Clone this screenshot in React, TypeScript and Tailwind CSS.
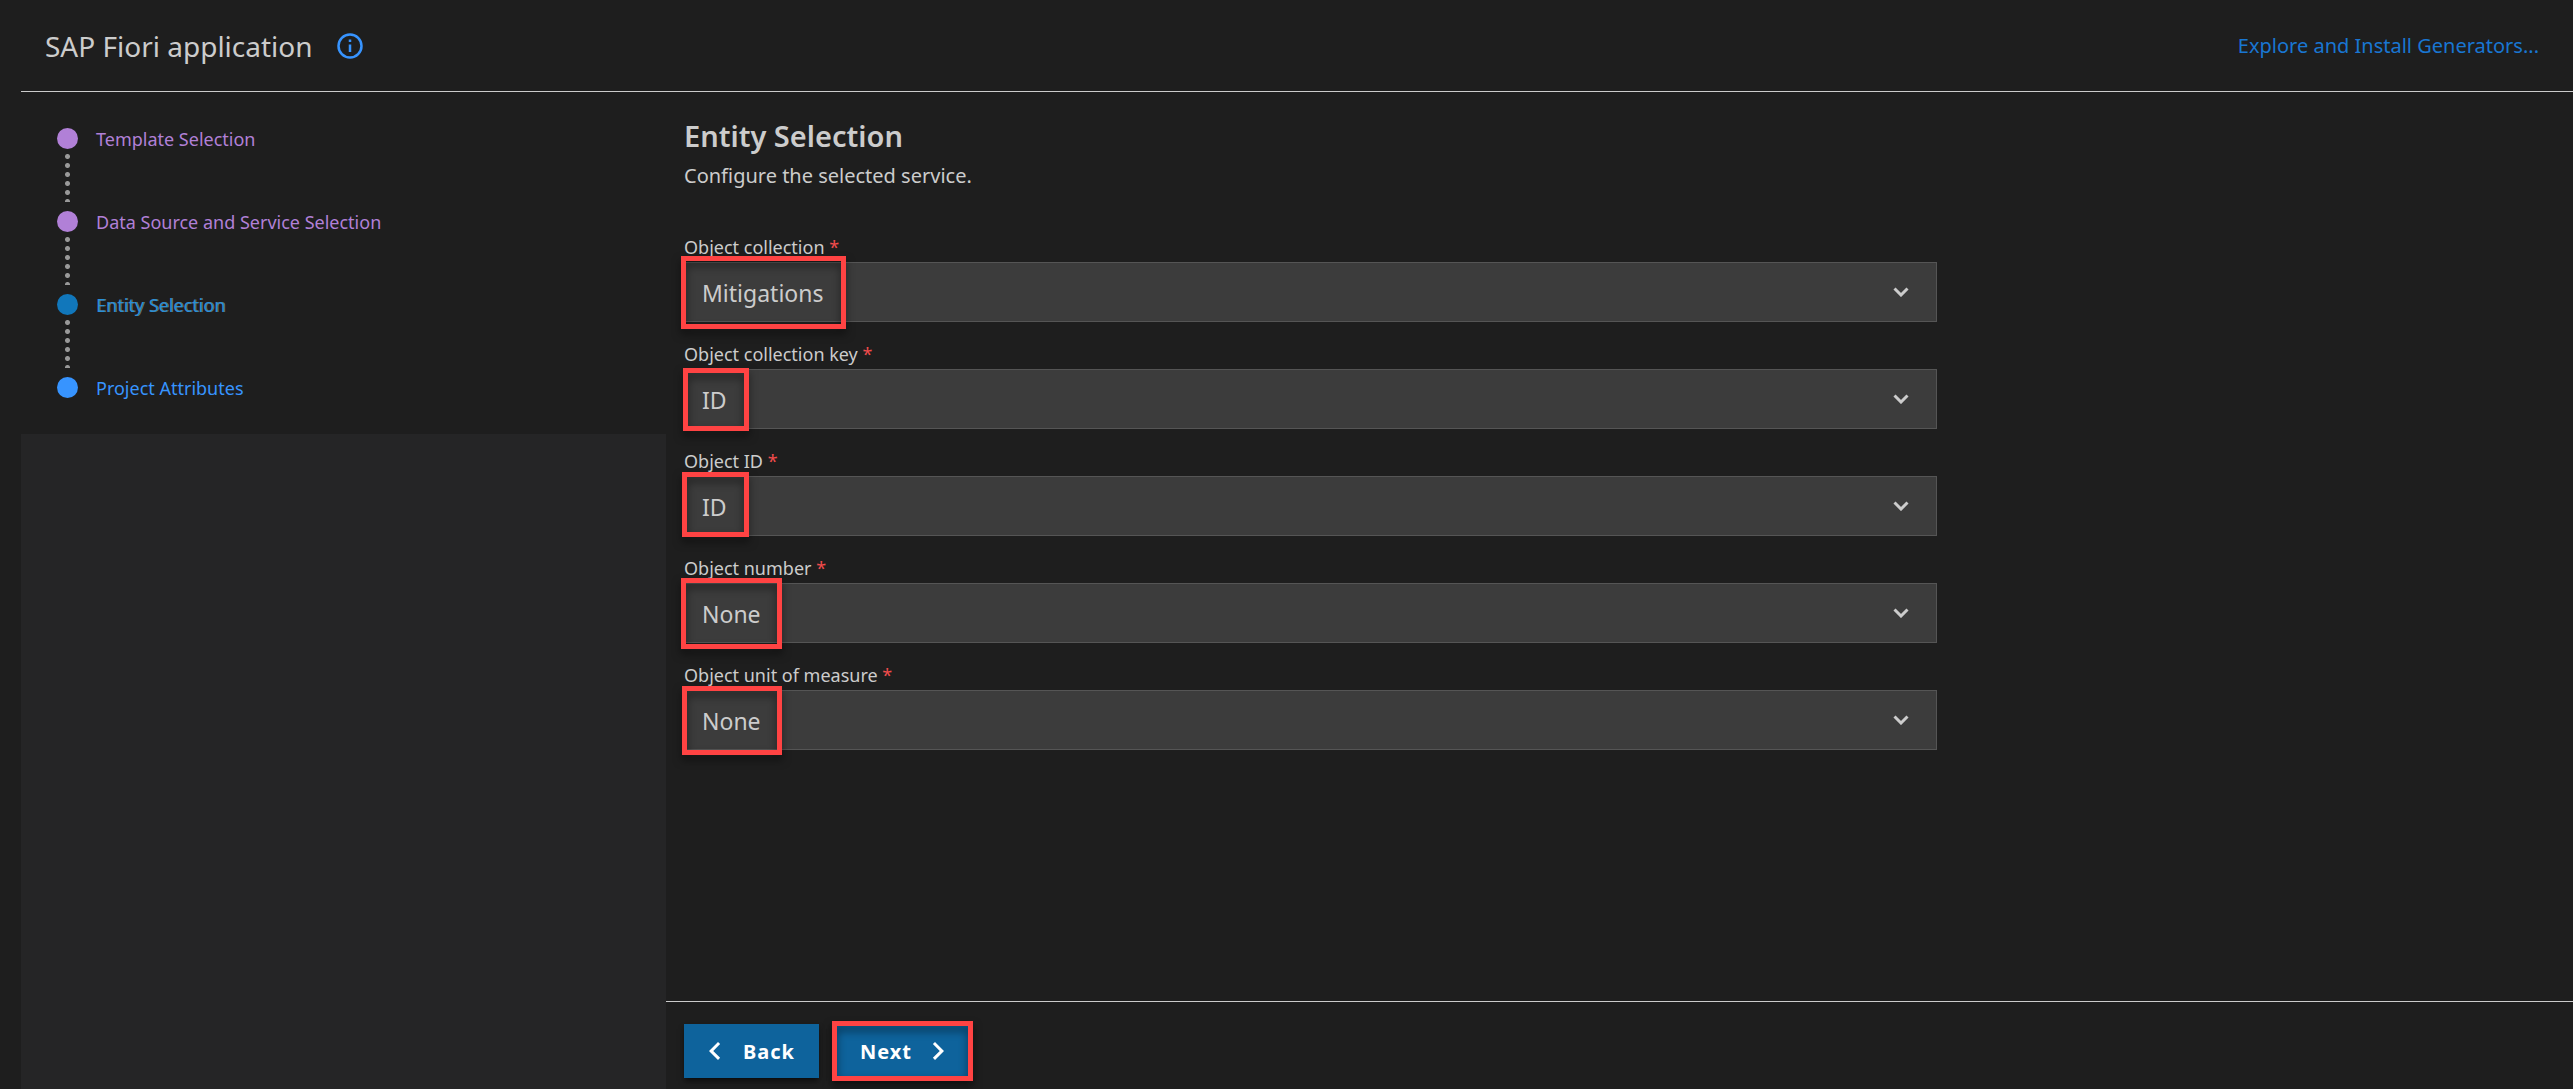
import React from "react";

type Step = { label: string; dot: string; text: string };

const steps: Step[] = [
  { label: "Template Selection", dot: "bg-[#b180d7]", text: "text-[#b180d7]" },
  { label: "Data Source and Service Selection", dot: "bg-[#b180d7]", text: "text-[#b180d7]" },
  {
    label: "Entity Selection",
    dot: "bg-[#1177bb]",
    text: "text-[#2a8fd6] [text-shadow:1px_0_0_rgba(204,204,204,0.5)]",
  },
  { label: "Project Attributes", dot: "bg-[#3794ff]", text: "text-[#3794ff]" },
];

type Field = { id: string; label: string; value: string; mark: string };

const fields: Field[] = [
  { id: "collection", label: "Object collection", value: "Mitigations", mark: "-left-[3px] -top-1.5 h-[73px] w-[165px]" },
  { id: "collection-key", label: "Object collection key", value: "ID", mark: "-left-px -top-px h-[63px] w-[66px]" },
  { id: "object-id", label: "Object ID", value: "ID", mark: "-left-0.5 -top-1 h-[65px] w-[67px]" },
  { id: "number", label: "Object number", value: "None", mark: "-left-[3px] -top-[5px] h-[71px] w-[101px]" },
  { id: "unit", label: "Object unit of measure", value: "None", mark: "-left-0.5 -top-1 h-[69px] w-[100px]" },
];

function Highlight({ className }: { className: string }) {
  return (
    <span
      aria-hidden="true"
      className={`pointer-events-none absolute border-[5px] border-[#ff4343] drop-shadow-[0_5px_4px_rgba(0,0,0,0.5)] ${className}`}
    />
  );
}

function Chevron({ d, className }: { d: string; className: string }) {
  return (
    <svg width="36" height="36" viewBox="0 0 24 24" fill="currentColor" aria-hidden="true" className={className}>
      <path d={d} />
    </svg>
  );
}

const LEFT = "M15.41 16.58 10.83 12l4.58-4.59L14 6l-6 6 6 6z";
const RIGHT = "M8.59 16.58 13.17 12 8.59 7.41 10 6l6 6-6 6z";

function SelectField({ field }: { field: Field }) {
  return (
    <div>
      <label htmlFor={field.id} className="block h-[30px] text-[18px] leading-[30px]">
        {field.label} <span className="text-[#f14c4c]">*</span>
      </label>
      <div className="relative">
        <select
          id={field.id}
          defaultValue={field.value}
          className="block h-[60px] w-full appearance-none border border-[#555555] bg-[#3c3c3c] px-[17px] pt-0.5 text-[23px] text-[#cccccc] outline-none"
        >
          <option>{field.value}</option>
        </select>
        <svg
          width="16"
          height="10"
          viewBox="0 0 16 10"
          fill="none"
          stroke="#cccccc"
          strokeWidth="3"
          aria-hidden="true"
          className="pointer-events-none absolute right-7 top-[25px]"
        >
          <path d="M1.5 1.5 8 8l6.500-6.500" />
        </svg>
        <Highlight className={field.mark} />
      </div>
    </div>
  );
}

export default function App() {
  return (
    <div className="flex min-h-screen flex-col bg-[#1e1e1e] pl-[21px] font-['Noto_Sans',sans-serif] text-[#cccccc]">
      <header className="flex h-[92px] items-center border-b border-[#cccccc] pl-6 pr-[34px]">
        <h1 className="text-[28px]">SAP Fiori application</h1>
        <button type="button" aria-label="About this generator" className="ml-6 text-[#3794ff]">
          <svg width="26" height="26" viewBox="0 0 26 26" fill="none" stroke="currentColor" aria-hidden="true">
            <circle cx="13" cy="13" r="11.500" strokeWidth="2.500" />
            <path d="M13 11.500v7.500M13 6.500v2.500" strokeWidth="2.500" />
          </svg>
        </button>
        <a href="#generators" className="ml-auto text-[20px] text-[#1976d2]">
          Explore and Install Generators...
        </a>
      </header>

      <div className="flex flex-1">
        <aside className="flex w-[645px] shrink-0 flex-col">
          <ol className="h-[342px] pl-9 pt-9">
            {steps.map((step, i) => (
              <li key={step.label} className="flex h-[83px] gap-[18px]">
                <div className="flex w-[21px] flex-col items-center gap-1">
                  <span className={`size-[21px] shrink-0 rounded-full ${step.dot}`} />
                  {i < steps.length - 1 && (
                    <span className="h-[49px] w-[5px] bg-[radial-gradient(circle_at_2.5px_3.5px,#999999_2px,transparent_3px)] bg-[length:5px_9px]" />
                  )}
                </div>
                <a href="#step" className={`h-[22px] text-[18px] leading-[22px] ${step.text}`}>
                  {step.label}
                </a>
              </li>
            ))}
          </ol>
          <div className="flex-1 bg-[#252526]" />
        </aside>

        <main className="flex flex-1 flex-col">
          <form className="flex-1 pl-[18px] pt-6">
            <h2 className="text-[29px] font-semibold leading-[40px]">Entity Selection</h2>
            <p className="text-[20px] leading-[40px]">Configure the selected service.</p>
            <div className="mt-9 flex max-w-[1253px] flex-col gap-[17px]">
              {fields.map((f) => (
                <SelectField key={f.id} field={f} />
              ))}
            </div>
          </form>
          <footer className="flex h-[88px] items-start gap-[15px] border-t border-[#cccccc] pl-[18px] pt-[22px] text-[20px] font-bold text-white">
            <button type="button" className="flex h-[54px] w-[135px] items-center bg-[#0e639c] pl-[13px] shadow-md shadow-black/50">
              <Chevron d={LEFT} className="mr-2.5" />
              <span className="pt-0.5 tracking-wider">Back</span>
            </button>
            <div className="relative">
              <button type="button" className="flex h-[54px] w-[135px] items-center bg-[#0e639c] pl-[26px] shadow-md shadow-black/50">
                <span className="pt-0.5 tracking-wider">Next</span>
                <Chevron d={RIGHT} className="ml-2" />
              </button>
              <Highlight className="-left-0.5 -top-[3px] h-[60px] w-[141px]" />
            </div>
          </footer>
        </main>
      </div>
    </div>
  );
}
